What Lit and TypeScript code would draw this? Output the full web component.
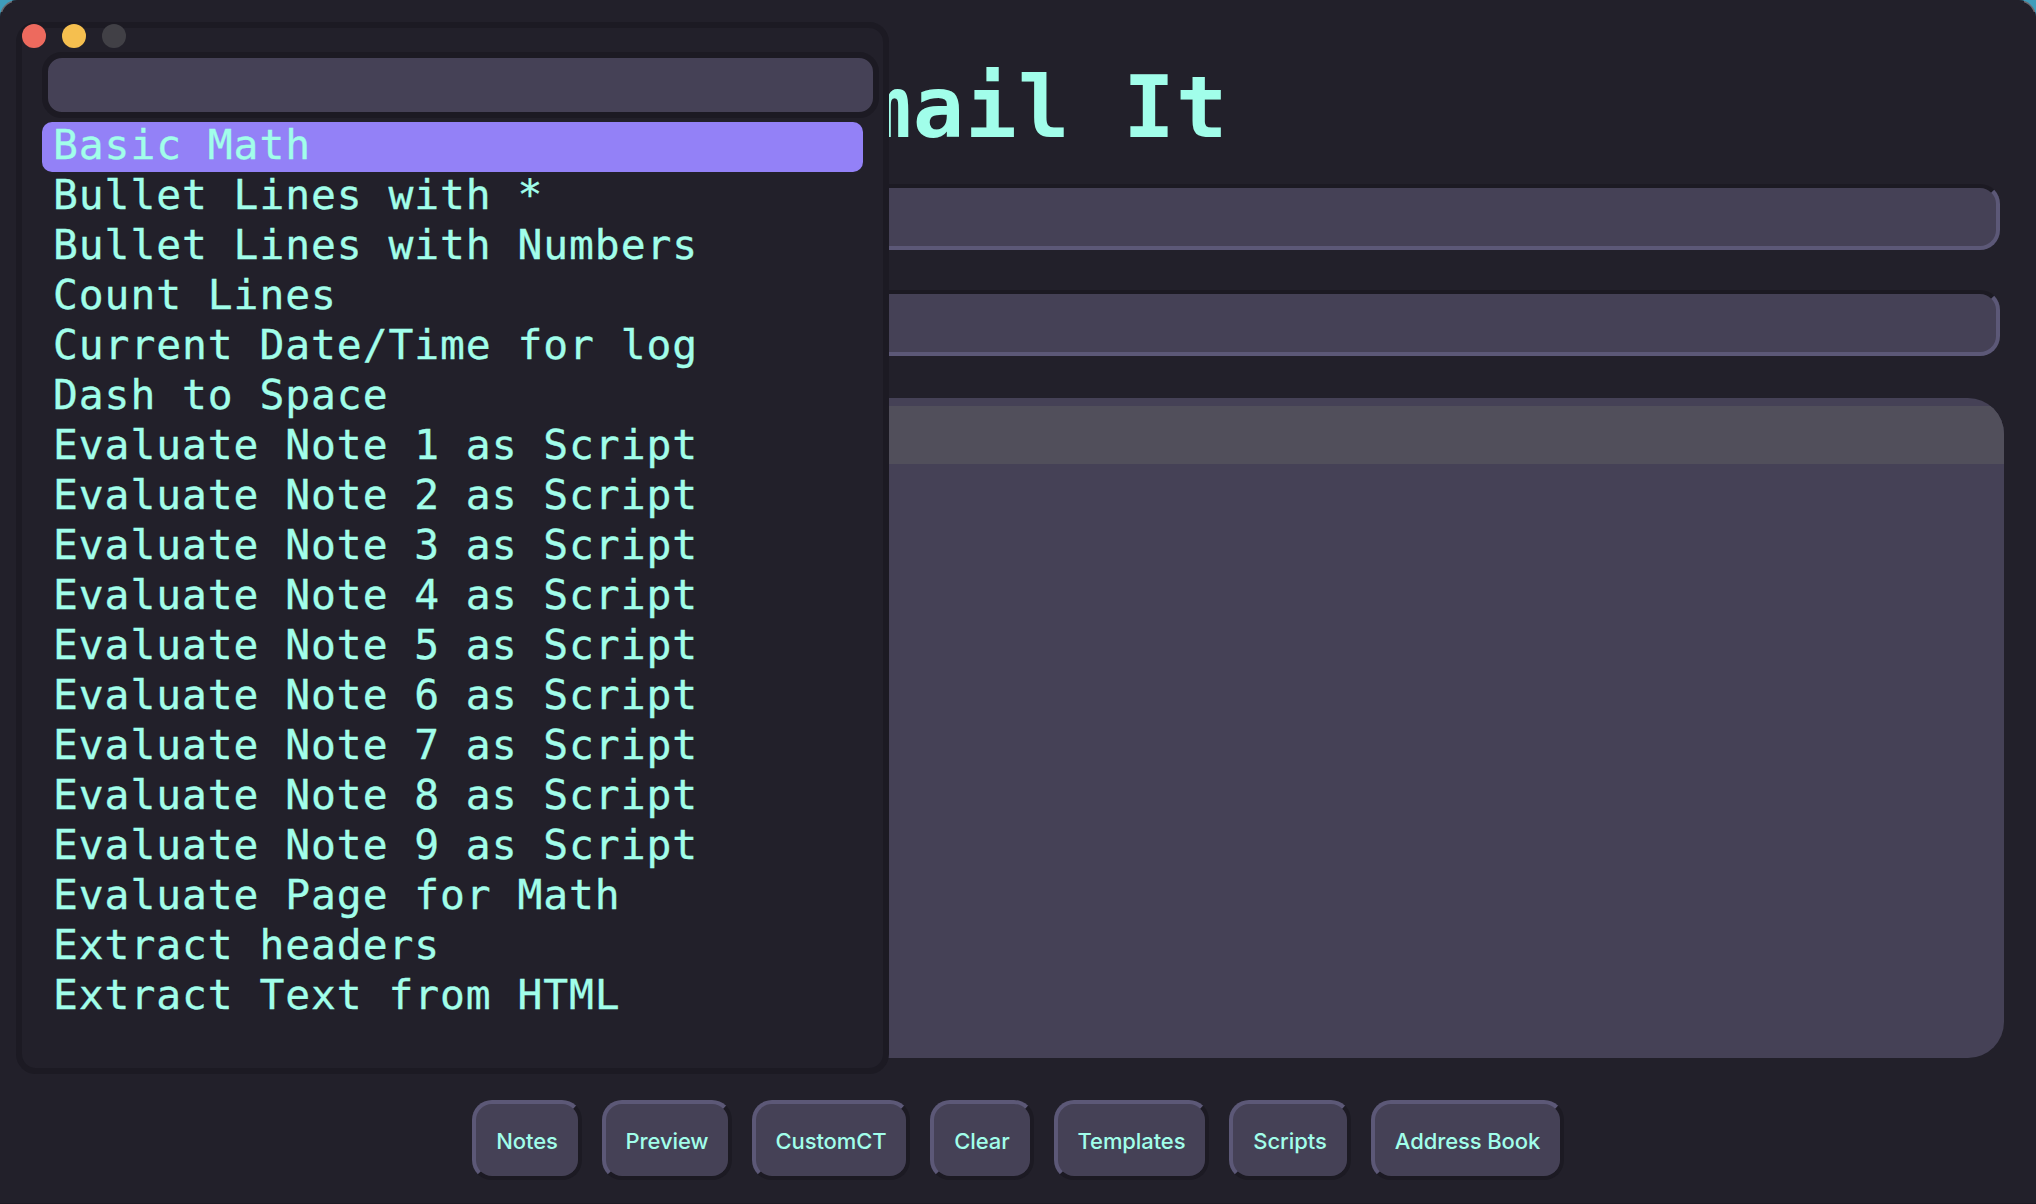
import { LitElement, html, css } from "lit";
import { customElement } from "lit/decorators.js";
import { classMap } from "lit/directives/class-map.js";

const SCRIPTS = [
  "Basic Math",
  "Bullet Lines with *",
  "Bullet Lines with Numbers",
  "Count Lines",
  "Current Date/Time for log",
  "Dash to Space",
  ...[1, 2, 3, 4, 5, 6, 7, 8, 9].map((n) => `Evaluate Note ${n} as Script`),
  "Evaluate Page for Math",
  "Extract headers",
  "Extract Text from HTML",
];

const ACTIONS = [
  { label: "Notes", width: 110 },
  { label: "Preview", width: 130 },
  { label: "CustomCT", width: 158 },
  { label: "Clear", width: 104 },
  { label: "Templates", width: 155 },
  { label: "Scripts", width: 122 },
  { label: "Address Book", width: 193 },
];

@customElement("script-menu")
class ScriptMenu extends LitElement {
  static styles = css`
    :host {
      display: flex;
      flex-direction: column;
      box-sizing: border-box;
      width: 873px;
      height: 1052px;
      padding: 24px 4px 0 20px;
      border: 6px solid #1c1a23;
      border-radius: 20px;
      background: #22202a;
      overflow: hidden;
    }
    .filter {
      box-sizing: border-box;
      flex: none;
      width: 837px;
      height: 66px;
      border: 6px solid #1c1a23;
      border-radius: 20px;
      background: #454156;
    }
    .list {
      display: flex;
      flex-direction: column;
      width: 821px;
      margin: 4px 0 0;
      padding: 0;
      list-style: none;
    }
    .item {
      box-sizing: border-box;
      height: 50px;
      padding-left: 11px;
      border-radius: 10px;
      font: 41.3px/46px "DejaVu Sans Mono", monospace;
      letter-spacing: 0.94px;
      -webkit-text-stroke: 0.35px #a1feea;
      white-space: pre;
      color: #a1feea;
    }
    .selected {
      background: #9381f7;
    }
  `;

  render() {
    return html`
      <div class="filter"></div>
      <ul class="list">
        ${SCRIPTS.map(
          (name, i) => html`<li class=${classMap({ item: true, selected: i === 0 })}>${name}</li>`
        )}
      </ul>
    `;
  }
}

@customElement("app-root")
class AppRoot extends LitElement {
  static styles = css`
    :host {
      display: block;
      width: 2036px;
      height: 1204px;
      background: #3f9dbb;
      overflow: hidden;
    }
    .window {
      position: relative;
      display: flex;
      flex-direction: column;
      box-sizing: border-box;
      height: 1204px;
      padding: 0 32px;
      border-radius: 17px 17px 0 0;
      background:
        radial-gradient(circle at 17px 17px, transparent 15px, #6b6a70 16px) 0 0 / 12px 12px no-repeat,
        radial-gradient(circle at -5px 17px, transparent 15px, #6b6a70 16px) 100% 0 / 12px 12px no-repeat,
        #22202a;
      box-shadow: inset 0 -1px #1c1a23;
      overflow: hidden;
    }
    .title {
      margin: 0;
      height: 184px;
      padding-top: 58px;
      box-sizing: border-box;
      font: bold 85.5px/100px "DejaVu Sans Mono", monospace;
      letter-spacing: 1.2px;
      text-align: center;
      color: #a1feea;
    }
    .field {
      box-sizing: border-box;
      height: 66px;
      margin: 0 4px 40px;
      border: 4px solid;
      border-color: #1c1a23 #5c5877 #5c5877 #1c1a23;
      border-radius: 20px;
      background: #454156;
    }
    .editor {
      box-sizing: border-box;
      height: 660px;
      margin-top: 2px;
      padding-top: 8px;
      border-radius: 36px;
      background: #454156;
      overflow: hidden;
    }
    .line {
      height: 58px;
      background: #514f5b;
    }
    .actions {
      display: flex;
      justify-content: center;
      gap: 20px;
      margin-top: 42px;
    }
    .action {
      box-sizing: border-box;
      flex: none;
      height: 80px;
      padding: 2px 0 0;
      border: 4px solid;
      border-color: #5c5877 #1c1a23 #1c1a23 #5c5877;
      border-radius: 20px;
      background: #454156;
      color: #a1feea;
      font: 500 22px/28px Inter, sans-serif;
      letter-spacing: -0.1px;
      white-space: nowrap;
    }
    .menu {
      position: absolute;
      left: 16px;
      top: 22px;
    }
    .lights {
      position: absolute;
      left: 22px;
      top: 24px;
      display: flex;
      gap: 16px;
    }
    .light {
      width: 24px;
      height: 24px;
      border-radius: 50%;
    }
    .close {
      background: #ed6a5e;
    }
    .minimize {
      background: #f5bf4f;
    }
    .zoom {
      background: #414046;
    }
  `;

  render() {
    return html`
      <main class="window">
        <h1 class="title">Email It</h1>
        <div class="field"></div>
        <div class="field"></div>
        <div class="editor"><div class="line"></div></div>
        <div class="actions">
          ${ACTIONS.map(
            (a) => html`<button class="action" style="width:${a.width}px">${a.label}</button>`
          )}
        </div>
        <script-menu class="menu"></script-menu>
        <div class="lights">
          <span class="light close"></span>
          <span class="light minimize"></span>
          <span class="light zoom"></span>
        </div>
      </main>
    `;
  }
}
